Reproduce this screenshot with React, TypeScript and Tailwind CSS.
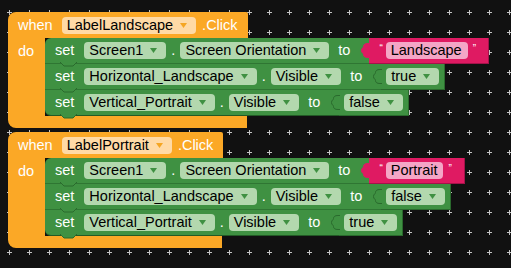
import React from "react";

const GREEN = "bg-[#3f9142]";

function Arrow({ color }: { color: string }) {
  return (
    <svg width="7" height="5" viewBox="0 0 7 5" className="ml-[7px]">
      <path d="M0 0 H7 L3.5 5 Z" fill={color} />
    </svg>
  );
}

function Field({ text, bg, arrow }: { text: string; bg: string; arrow?: string }) {
  return (
    <span className={`flex h-[17px] items-center rounded-[4px] pl-[5px] text-black ${bg} ${arrow ? "pr-[9px]" : "pr-[6px]"}`}>
      {text}
      {arrow && <Arrow color={arrow} />}
    </span>
  );
}

function GreenField({ text }: { text: string }) {
  return <Field text={text} bg="bg-[#b3d8ae]" arrow="#3f9142" />;
}

function Tab({ fill, stroke }: { fill: string; stroke: string }) {
  return (
    <svg width="9" height="15" viewBox="0 0 9 15" className="absolute left-[-8px] top-[5px]">
      <path
        d="M9 0.5 H7 C4 0.5 2.5 1.5 2.5 3.5 C2.5 5 0.5 5 0.5 7.5 C0.5 10 2.5 10 2.5 11.5 C2.5 13.5 4 14.5 7 14.5 H9"
        fill={fill}
        stroke={stroke}
        strokeWidth="1"
      />
    </svg>
  );
}

function Bump() {
  return (
    <svg width="17" height="5" viewBox="0 0 17 5" className="absolute bottom-[-4px] left-[15px] z-10">
      <path d="M0 0 L4 4 H13 L17 0" fill="#3f9142" stroke="#2a6a2d" strokeWidth="1" />
    </svg>
  );
}

function BoolBlock({ value }: { value: string }) {
  return (
    <div className={`relative flex h-[26px] items-center border-r border-b border-[#2a6a2d] pl-[5px] pr-[5px] ${GREEN}`}>
      <Tab fill="#3f9142" stroke="#2a6a2d" />
      <GreenField text={value} />
    </div>
  );
}

function TextBlock({ value }: { value: string }) {
  return (
    <div className="relative flex h-[26px] items-start border-r border-b border-[#a3124a] bg-[#df1a62] pl-[10px] pr-[12px]">
      <Tab fill="#df1a62" stroke="#df1a62" />
      <span className="mt-[6px] text-[10px] leading-none text-white">“</span>
      <span className="ml-[3px] mt-[4px]">
        <Field text={value} bg="bg-[#f4a6c6]" />
      </span>
      <span className="ml-[5px] mt-[6px] text-[10px] leading-none text-white">”</span>
    </div>
  );
}

function SetRow({
  comp,
  prop,
  value,
  first,
  last,
}: {
  comp: string;
  prop: string;
  value: React.ReactNode;
  first?: boolean;
  last?: boolean;
}) {
  return (
    <div className="flex">
      <div
        className={`relative flex h-[26px] items-center border-b border-[#2f7633] pl-[10px] pr-[19px] text-white ${GREEN} ${first ? "rounded-tl-[6px]" : ""} ${last ? "rounded-bl-[6px] border-[#235a26]" : ""}`}
      >
        <span>set</span>
        <span className="ml-[10px]">
          <GreenField text={comp} />
        </span>
        <span className="mx-[5px]">.</span>
        <GreenField text={prop} />
        <span className="ml-[9px]">to</span>
        <Bump />
      </div>
      {value}
    </div>
  );
}

function EventBlock({
  label,
  bottomWidth,
  rows,
}: {
  label: string;
  bottomWidth: string;
  rows: { comp: string; prop: string; value: React.ReactNode }[];
}) {
  return (
    <div className="flex flex-col items-start">
      <div className="flex h-[26px] items-center rounded-tl-[8px] rounded-tr-[2px] bg-[#fba826] pl-[10px] pr-[10px] text-white">
        <span>when</span>
        <span className="ml-[9px]">
          <Field text={label} bg="bg-[#ffdaa6]" arrow="#f5a623" />
        </span>
        <span className="ml-[6px]">.Click</span>
      </div>
      <div className="flex">
        <div className="w-[37px] bg-[#fba826] pl-[10px] text-white">
          <div className="flex h-[26px] items-center">do</div>
        </div>
        <div className="flex flex-col">
          {rows.map((r, i) => (
            <SetRow
              key={i}
              comp={r.comp}
              prop={r.prop}
              value={r.value}
              first={i === 0}
              last={i === rows.length - 1}
            />
          ))}
        </div>
      </div>
      <div className={`h-[12px] rounded-bl-[8px] bg-[#fba826] ${bottomWidth}`} />
    </div>
  );
}

export default function App() {
  return (
    <div className="relative h-[268px] w-[511px] overflow-hidden bg-[#111111] font-['Liberation_Sans',Arial,sans-serif] text-[14.5px] leading-none">
      {/* workspace grid */}
      <svg className="absolute inset-0" width="511" height="268">
        <defs>
          <pattern id="grid" x="0" y="0" width="20" height="20" patternUnits="userSpaceOnUse">
            <path d="M7 12.5 H12 M9.5 10 V15" stroke="#c4c4c4" strokeWidth="1" />
          </pattern>
        </defs>
        <rect width="511" height="268" fill="url(#grid)" />
      </svg>

      <div className="relative flex flex-col gap-[4px] pl-[8px] pt-[12px]">
        <EventBlock
          label="LabelLandscape"
          bottomWidth="w-[239px]"
          rows={[
            { comp: "Screen1", prop: "Screen Orientation", value: <TextBlock value="Landscape" /> },
            { comp: "Horizontal_Landscape", prop: "Visible", value: <BoolBlock value="true" /> },
            { comp: "Vertical_Portrait", prop: "Visible", value: <BoolBlock value="false" /> },
          ]}
        />
        <EventBlock
          label="LabelPortrait"
          bottomWidth="w-[214px]"
          rows={[
            { comp: "Screen1", prop: "Screen Orientation", value: <TextBlock value="Portrait" /> },
            { comp: "Horizontal_Landscape", prop: "Visible", value: <BoolBlock value="false" /> },
            { comp: "Vertical_Portrait", prop: "Visible", value: <BoolBlock value="true" /> },
          ]}
        />
      </div>
    </div>
  );
}
